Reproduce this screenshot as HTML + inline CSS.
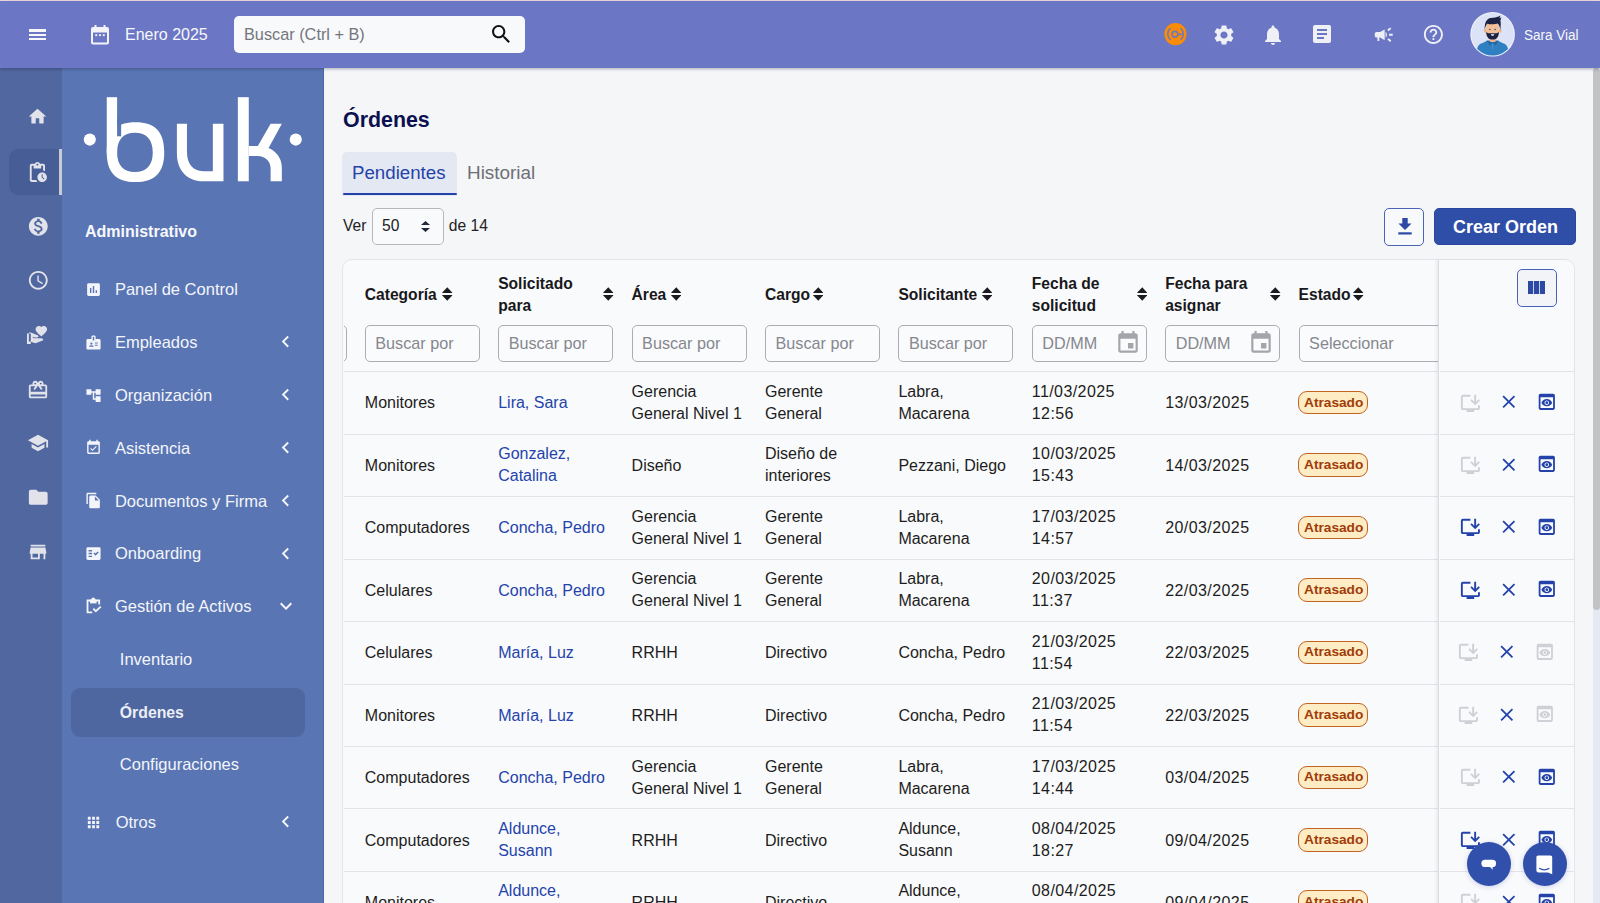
<!DOCTYPE html>
<html><head><meta charset="utf-8"><title>Órdenes</title>
<style>
*{box-sizing:border-box;margin:0;padding:0}
html,body{width:1600px;height:903px;overflow:hidden;background:#f5f6f9;font-family:"Liberation Sans",sans-serif;color:#1f1f23}
.t{position:absolute;white-space:nowrap}
.ic{position:absolute;display:block}
.b{position:absolute}
</style></head><body>
<div class="b" style="left:0;top:0;width:1600px;height:1px;background:#f3dede"></div>
<div class="b" style="left:0;top:68px;width:62px;height:835px;background:#50679f"></div>
<div class="b" style="left:62px;top:68px;width:262px;height:835px;background:#5a75b3"></div>
<div class="b" style="left:0;top:1px;width:1600px;height:67px;background:#6b77c4;box-shadow:0 1px 3px rgba(30,30,60,.35);z-index:3"></div>
<div style="position:absolute;left:0;top:0;width:1600px;height:68px;z-index:4">
<div class="b" style="left:29.2px;top:29.2px;width:17px;height:2.4px;background:#f7f7fb"></div>
<div class="b" style="left:29.2px;top:33.5px;width:17px;height:2.4px;background:#f7f7fb"></div>
<div class="b" style="left:29.2px;top:37.8px;width:17px;height:2.4px;background:#f7f7fb"></div>
<svg class="ic" style="left:90px;top:24px;width:20px;height:21px" viewBox="0 0 20 21"><path fill="#f4f4f8" d="M4.5 1h2v2h7V1h2v2h1.5A2 2 0 0 1 19 5v13.5a2 2 0 0 1-2 2H3a2 2 0 0 1-2-2V5a2 2 0 0 1 2-2h1.5zM3 8.5v10h14v-10z"/><rect x="5.3" y="10.2" width="1.9" height="1.9" fill="#f4f4f8"/><rect x="9.05" y="10.2" width="1.9" height="1.9" fill="#f4f4f8"/><rect x="12.8" y="10.2" width="1.9" height="1.9" fill="#f4f4f8"/></svg>
<div class="t" style="left:125.00px;top:25.00px;font-size:16px;line-height:20px;color:#f7f7fb;font-weight:400;">Enero 2025</div>
<div class="b" style="left:233.5px;top:16px;width:291px;height:37px;background:#f8f9fb;border-radius:5px"></div>
<div class="t" style="left:244.00px;top:24.00px;font-size:16.3px;line-height:20px;color:#74757c;font-weight:400;">Buscar (Ctrl + B)</div>
<svg class="ic" style="left:489.00px;top:22.00px;width:24.50px;height:24.50px;" viewBox="0 0 24 24" fill="#111"><path d="M15.5 14h-.79l-.28-.27C15.41 12.59 16 11.11 16 9.5 16 5.91 13.09 3 9.5 3S3 5.91 3 9.5 5.91 16 9.5 16c1.61 0 3.09-.59 4.23-1.57l.27.28v.79l5 4.99L20.49 19l-4.99-5zm-6 0C7.01 14 5 11.990 5 9.5S7.01 5 9.5 5 14 7.01 14 9.5 11.99 14 9.5 14z"/></svg>
<svg class="ic" style="left:1164px;top:23px;width:23px;height:23px" viewBox="0 0 23 23"><circle cx="11.45" cy="11.1" r="11.1" fill="#fb8c08"/><g stroke="#6c78c4" fill="none" stroke-width="1.4"><path d="M6.6 5.3A7.4 7.4 0 0 0 6.6 16.9"/><path d="M16.6 5.3A7.6 7.6 0 0 1 16.6 16.9"/><circle cx="10.95" cy="11.3" r="2.9" stroke-width="1.6"/><path d="M13.6 11.3H19.3" stroke-width="1.5"/></g></svg>
<svg class="ic" style="left:1212.20px;top:22.50px;width:24.00px;height:24.00px;" viewBox="0 0 24 24" fill="#eff0f5"><path d="M19.14 12.94c.04-.3.06-.61.06-.94 0-.32-.02-.64-.07-.94l2.03-1.58c.18-.14.23-.41.12-.61l-1.92-3.32c-.12-.22-.37-.29-.59-.22l-2.39.96c-.5-.38-1.03-.7-1.62-.94l-.36-2.54c-.04-.24-.24-.41-.48-.41h-3.84c-.24 0-.43.17-.47.41l-.36 2.54c-.59.24-1.13.57-1.62.94l-2.39-.96c-.22-.08-.47 0-.59.22L2.74 8.87c-.12.21-.08.47.12.61l2.03 1.58c-.05.3-.09.63-.09.94s.02.64.07.94l-2.03 1.58c-.18.14-.23.41-.12.61l1.92 3.320c.12.22.37.29.59.22l2.39-.96c.5.38 1.03.7 1.62.94l.36 2.54c.05.24.24.41.48.41h3.84c.24 0 .44-.17.47-.41l.36-2.54c.59-.24 1.13-.56 1.62-.94l2.39.96c.22.08.47 0 .59-.22l1.92-3.32c.12-.22.07-.47-.12-.61l-2.01-1.58zM12 15.6c-1.98 0-3.6-1.62-3.6-3.6s1.62-3.6 3.6-3.6 3.6 1.62 3.6 3.6-1.62 3.6-3.6 3.6z"/></svg>
<svg class="ic" style="left:1261.00px;top:22.50px;width:24.00px;height:24.00px;" viewBox="0 0 24 24" fill="#eff0f5"><path d="M12 22c1.1 0 2-.9 2-2h-4c0 1.1.89 2 2 2zm6-6v-5c0-3.07-1.64-5.64-4.5-6.32V4c0-.83-.67-1.5-1.5-1.5s-1.5.67-1.5 1.5v.68C7.63 5.36 6 7.92 6 11v5l-2 2v1h16v-1l-2-2z"/></svg>
<svg class="ic" style="left:1310.00px;top:22.00px;width:24.00px;height:24.00px;" viewBox="0 0 24 24" fill="#eff0f5"><path d="M19 3H5c-1.1 0-2 .9-2 2v14c0 1.1.9 2 2 2h14c1.1 0 2-.9 2-2V5c0-1.1-.9-2-2-2zm-5 14H7v-2h7v2zm3-4H7v-2h10v2zm0-4H7V7h10v2z"/></svg>
<svg class="ic" style="left:1372.60px;top:23.60px;width:21.50px;height:21.50px;" viewBox="0 0 24 24" fill="#eff0f5"><path d="M18 11v2h4v-2h-4zm-2 6.61c.96.71 2.21 1.65 3.2 2.39.4-.53.8-1.07 1.2-1.6-.99-.74-2.24-1.68-3.2-2.4-.4.54-.8 1.08-1.2 1.61zM20.4 5.6c-.4-.53-.8-1.07-1.2-1.6-.99.74-2.24 1.68-3.2 2.4.4.53.8 1.07 1.2 1.6.96-.72 2.21-1.65 3.2-2.4zM4 9c-1.1 0-2 .9-2 2v2c0 1.1.9 2 2 2h1v4h2v-4h1l5 3V6L8 9H4zm11.5 3c0-1.33-.58-2.53-1.5-3.35v6.69c.92-.81 1.5-2.01 1.5-3.34z"/></svg>
<svg class="ic" style="left:1421.50px;top:23.00px;width:22.80px;height:22.80px;" viewBox="0 0 24 24" fill="#eff0f5"><path d="M11 18h2v-2h-2v2zm1-16C6.48 2 2 6.48 2 12s4.48 10 10 10 10-4.48 10-10S17.52 2 12 2zm0 18c-4.41 0-8-3.59-8-8s3.59-8 8-8 8 3.59 8 8-3.590 8-8 8zm0-14c-2.21 0-4 1.79-4 4h2c0-1.1.9-2 2-2s2 .9 2 2c0 2-3 1.75-3 5h2c0-2.25 3-2.5 3-5 0-2.21-1.79-4-4-4z"/></svg>
<svg class="ic" style="left:1469.5px;top:12px;width:45px;height:45px" viewBox="0 0 45 45"><defs><clipPath id="av"><circle cx="22.6" cy="22.3" r="21.2"/></clipPath></defs><circle cx="22.6" cy="22.3" r="22.3" fill="#eef0fa"/><circle cx="22.6" cy="22.3" r="21.2" fill="#dce3f7"/><g clip-path="url(#av)"><path d="M6.9 44 C6.6 36 7.5 32.5 12 31.2 L17.5 28.6 H27.6 L33 31.2 C37.5 32.5 38.6 36 38.4 44Z" fill="#2f7fc3"/><rect x="19.6" y="25.5" width="6.2" height="4.5" fill="#eeb48c"/><path d="M16.6 28.4 L22.6 30.6 L19.8 33.6Z" fill="#2565a0"/><path d="M28.6 28.4 L22.6 30.6 L25.4 33.6Z" fill="#2565a0"/><rect x="22.1" y="32.2" width="1" height="5.4" fill="#5a8fbe"/><ellipse cx="15.2" cy="18.7" rx="1.4" ry="2" fill="#eeb48c"/><ellipse cx="30.2" cy="18.7" rx="1.4" ry="2" fill="#eeb48c"/><path d="M16.3 13 C16.3 10.5 18.5 10 22.6 10 C26.7 10 28.8 10.5 28.8 13 V22 C28.8 25.5 26 27.5 22.6 27.5 C19.2 27.5 16.3 25.5 16.3 22Z" fill="#f2bf98"/><path d="M16.1 19.5 C16.5 25.8 19 27.6 22.6 27.6 C26.2 27.6 28.7 25.8 28.9 19.5 C27.8 21.5 26.5 21.2 22.6 21.2 C18.7 21.2 17.2 21.5 16.1 19.5Z" fill="#1b2142"/><path d="M20.8 22.2 H24.4 C24 23.4 23.3 23.8 22.6 23.8 C21.9 23.8 21.2 23.4 20.8 22.2Z" fill="#fff"/><path d="M14.8 18 C14.2 8.5 18 5.6 23 5.8 C26 5.6 28 5 30.4 3.6 C30.2 5 29.6 5.8 29.4 6.2 L31.4 5.6 C31 7 30.6 8 30.4 8.6 C31 11 30.8 15 30.2 18 C29.6 14 28.8 12 27.6 11.5 C25.5 12.5 20 12.6 17.2 11.8 C16 13 15.2 15 14.8 18Z" fill="#1c2444"/><circle cx="19.9" cy="17.6" r=".75" fill="#3b4a55"/><circle cx="25.1" cy="17.6" r=".75" fill="#3b4a55"/></g></svg>
<div class="t" style="left:1523.80px;top:26.00px;font-size:14px;line-height:18px;color:#f7f7fb;font-weight:400;transform:scaleX(0.965);transform-origin:0 0">Sara Vial</div>
</div>
<div class="b" style="left:9px;top:149px;width:50px;height:46px;background:#475d95;border-radius:9px 0 0 9px"></div>
<div class="b" style="left:58.5px;top:149px;width:3.7px;height:46px;background:#c9cbd4"></div>
<svg class="ic" style="left:27.20px;top:106.00px;width:21.00px;height:21.00px;" viewBox="0 0 24 24" fill="#e2e3ea"><path d="M10 20v-6h4v6h5v-8h3L12 3 2 12h3v8z"/></svg>
<svg class="ic" style="left:26.20px;top:160.50px;width:22.80px;height:22.80px;" viewBox="0 0 24 24" fill="#e2e3ea"><path d="M17 12c-2.76 0-5 2.24-5 5s2.24 5 5 5 5-2.24 5-5-2.24-5-5-5zm1.65 7.35L16.5 17.2V14h1v2.79l1.85 1.85-.7.71zM18 3h-3.18C14.4 1.84 13.3 1 12 1s-2.4.84-2.82 2H6c-1.1 0-2 .9-2 2v15c0 1.1.9 2 2 2h6.11c-.59-.57-1.07-1.25-1.42-2H6V5h2v3h8V5h2v5.08c.71.1 1.38.31 2 .6V5c0-1.1-.9-2-2-2zm-6 2c-.55 0-1-.45-1-1s.45-1 1-1 1 .45 1 1-.45 1-1 1z"/></svg>
<svg class="ic" style="left:26.50px;top:214.80px;width:22.60px;height:22.60px;" viewBox="0 0 24 24" fill="#e2e3ea"><path d="M12 2C6.48 2 2 6.48 2 12s4.48 10 10 10 10-4.48 10-10S17.52 2 12 2zm1.41 16.09V20h-2.67v-1.93c-1.71-.36-3.16-1.46-3.27-3.4h1.96c.1 1.05.82 1.87 2.65 1.87 1.96 0 2.4-.98 2.4-1.59 0-.83-.44-1.61-2.67-2.14-2.48-.6-4.18-1.62-4.18-3.67 0-1.72 1.39-2.84 3.11-3.21V4h2.67v1.95c1.86.45 2.79 1.86 2.85 3.39H14.3c-.05-1.11-.64-1.87-2.22-1.87-1.5 0-2.4.68-2.4 1.64 0 .84.65 1.39 2.67 1.91s4.18 1.39 4.18 3.91c-.01 1.83-1.38 2.83-3.12 3.16z"/></svg>
<svg class="ic" style="left:26.50px;top:269.00px;width:22.60px;height:22.60px;" viewBox="0 0 24 24" fill="#e2e3ea"><path d="M11.99 2C6.47 2 2 6.48 2 12s4.47 10 9.99 10C17.52 22 22 17.52 22 12S17.52 2 11.99 2zM12 20c-4.42 0-8-3.58-8-8s3.58-8 8-8 8 3.58 8 8-3.58 8-8 8zm.5-13H11v6l5.25 3.15.75-1.23-4.5-2.67z"/></svg>
<svg class="ic" style="left:26.30px;top:322.90px;width:23.00px;height:23.00px;" viewBox="0 0 24 24" fill="#e2e3ea"><path d="M16 13.97C17.62 12.42 22 9.26 22 6.5 22 4.5 20.5 3 18.5 3c-1.04 0-2.04.5-2.5 1.2C15.54 3.5 14.54 3 13.5 3 11.5 3 10 4.5 10 6.5c0 2.76 4.38 5.92 6 7.47zM1 11h4v11H1V11zm15 5h-7l-2.09-.73.33-.94L9 15h2.82c.65 0 1.18-.53 1.18-1.18 0-.49-.31-.93-.77-1.11L4.97 10H3v9.02L10 21l8.01-3c-.01-1.1-.9-2-2.01-2z"/></svg>
<svg class="ic" style="left:26.90px;top:378.70px;width:22.00px;height:22.00px;" viewBox="0 0 24 24" fill="#e2e3ea"><path d="M20 6h-2.18c.11-.31.18-.65.18-1 0-1.66-1.34-3-3-3-1.05 0-1.96.54-2.5 1.35l-.5.67-.5-.68C10.96 2.54 10.05 2 9 2 7.34 2 6 3.34 6 5c0 .35.07.69.18 1H4c-1.11 0-1.99.89-1.99 2L2 19c0 1.11.89 2 2 2h16c1.11 0 2-.89 2-2V8c0-1.11-.89-2-2-2zm-5-2c.55 0 1 .45 1 1s-.45 1-1 1-1-.45-1-1 .45-1 1-1zM9 4c.55 0 1 .45 1 1s-.45 1-1 1-1-.45-1-1 .45-1 1-1zm11 15H4v-2h16v2zm0-5H4V8h5.08L7 10.83 8.62 12 11 8.76l1-1.36 1 1.36L15.38 12 17 10.83 14.92 8H20v6z"/></svg>
<svg class="ic" style="left:26.90px;top:432.20px;width:22.00px;height:22.00px;" viewBox="0 0 24 24" fill="#e2e3ea"><path d="M5 13.18v4L12 21l7-3.82v-4L12 17l-7-3.82zM12 3L1 9l11 6 9-4.91V17h2V9L12 3z"/></svg>
<svg class="ic" style="left:26.80px;top:486.20px;width:22.50px;height:22.50px;" viewBox="0 0 24 24" fill="#e2e3ea"><path d="M10 4H4c-1.1 0-1.99.9-1.99 2L2 18c0 1.1.9 2 2 2h16c1.1 0 2-.9 2-2V8c0-1.1-.9-2-2-2h-8l-2-2z"/></svg>
<svg class="ic" style="left:26.80px;top:541.00px;width:22.00px;height:22.00px;" viewBox="0 0 24 24" fill="#e2e3ea"><path d="M20 4H4v2h16V4zm1 10v-2l-1-5H4l-1 5v2h1v6h10v-6h4v6h2v-6h1zm-9 4H6v-4h6v4z"/></svg>
<svg class="ic" style="left:78px;top:90px;width:230px;height:100.05px" viewBox="0 0 1600 696" fill="#fff"><circle cx="82" cy="345" r="42"/><circle cx="1515" cy="345" r="42"/><path d="M200 50H272V440H200Z"/><path fill-rule="evenodd" d="M400 225C536 225 600 291.5 600 432.5C600 573.5 536 640 400 640C264 640 200 573.5 200 432.5C200 291.5 264 225 400 225ZM396 298C476.6 298 520 345.6 520 434C520 522.4 476.6 570 396 570C315.4 570 272 522.4 272 434C272 345.6 315.4 298 396 298Z"/><rect x="272" y="200" width="28" height="122" fill="#5a75b3"/><path d="M688 235H758V430C758 515 800 565 870 565H938V235H1012V635H870C760 635 688 560 688 440Z"/><path d="M1112 50H1188V635H1112Z"/><path d="M1340 235H1418L1325 405L1250 392Z"/><path d="M1188 390H1250C1350 390 1418 455 1418 540V635H1340V545C1340 495 1300 460 1250 460H1188Z"/></svg>
<div class="t" style="left:85.00px;top:222.00px;font-size:16px;line-height:20px;color:#f7f8fc;font-weight:700;">Administrativo</div>
<div class="t" style="left:114.90px;top:279.00px;font-size:16.5px;line-height:21px;color:#f3f5fb;font-weight:400;">Panel de Control</div>
<svg class="ic" style="left:84.50px;top:281.00px;width:17.00px;height:17.00px;" viewBox="0 0 24 24" fill="#f3f5fb"><path d="M19 3H5c-1.1 0-2 .9-2 2v14c0 1.1.9 2 2 2h14c1.1 0 2-.9 2-2V5c0-1.1-.9-2-2-2zM9 17H7v-7h2v7zm4 0h-2V7h2v10zm4 0h-2v-4h2v4z"/></svg>
<div class="t" style="left:114.90px;top:332.00px;font-size:16.5px;line-height:21px;color:#f3f5fb;font-weight:400;">Empleados</div>
<svg class="ic" style="left:84.50px;top:333.80px;width:17.00px;height:17.00px;" viewBox="0 0 24 24" fill="#f3f5fb"><path d="M20 7h-5V4c0-1.1-.9-2-2-2h-2c-1.1 0-2 .9-2 2v3H4c-1.1 0-2 .9-2 2v11c0 1.1.9 2 2 2h16c1.1 0 2-.9 2-2V9c0-1.1-.9-2-2-2zM9 12c.83 0 1.5.67 1.5 1.5S9.83 15 9 15s-1.5-.67-1.5-1.5S8.17 12 9 12zm3 6H6v-.75c0-1 2-1.5 3-1.5s3 .5 3 1.5V18zm1-9h-2V4h2v5zm5 7.5h-4V15h4v1.5zm0-3h-4V12h4v1.5z"/></svg>
<svg class="ic" style="left:273.90px;top:330.20px;width:23.20px;height:23.20px;" viewBox="0 0 24 24" fill="#f3f5fb"><path d="M15.41 7.41L14 6l-6 6 6 6 1.41-1.41L10.83 12z"/></svg>
<div class="t" style="left:114.90px;top:385.00px;font-size:16.5px;line-height:21px;color:#f3f5fb;font-weight:400;">Organización</div>
<svg class="ic" style="left:84.50px;top:386.60px;width:17.00px;height:17.00px;" viewBox="0 0 24 24" fill="#f3f5fb"><path d="M22 11V3h-7v3H9V3H2v8h7V8h2v10h4v3h7v-8h-7v3h-2V8h2v3z"/></svg>
<svg class="ic" style="left:273.90px;top:383.00px;width:23.20px;height:23.20px;" viewBox="0 0 24 24" fill="#f3f5fb"><path d="M15.41 7.41L14 6l-6 6 6 6 1.41-1.41L10.83 12z"/></svg>
<div class="t" style="left:114.90px;top:438.00px;font-size:16.5px;line-height:21px;color:#f3f5fb;font-weight:400;">Asistencia</div>
<svg class="ic" style="left:84.50px;top:439.40px;width:17.00px;height:17.00px;" viewBox="0 0 24 24" fill="#f3f5fb"><path d="M16.53 11.06L15.47 10l-4.88 4.88-2.12-2.12-1.06 1.06L10.59 17l5.94-5.94zM19 3h-1V1h-2v2H8V1H6v2H5c-1.11 0-1.99.9-1.99 2L3 19c0 1.1.89 2 2 2h14c1.1 0 2-.9 2-2V5c0-1.1-.9-2-2-2zm0 16H5V8h14v11z"/></svg>
<svg class="ic" style="left:273.90px;top:435.80px;width:23.20px;height:23.20px;" viewBox="0 0 24 24" fill="#f3f5fb"><path d="M15.41 7.41L14 6l-6 6 6 6 1.41-1.41L10.83 12z"/></svg>
<div class="t" style="left:114.90px;top:491.00px;font-size:16.5px;line-height:21px;color:#f3f5fb;font-weight:400;">Documentos y Firma</div>
<svg class="ic" style="left:84.50px;top:492.40px;width:17.00px;height:17.00px;" viewBox="0 0 24 24" fill="#f3f5fb"><path d="M16 1H4c-1.1 0-2 .9-2 2v14h2V3h12V1zm-1 4l6 6v10c0 1.1-.9 2-2 2H7.99C6.89 23 6 22.1 6 21l.01-14c0-1.1.89-2 1.99-2h7zm-1 7h5.5L14 6.5V12z"/></svg>
<svg class="ic" style="left:273.90px;top:488.80px;width:23.20px;height:23.20px;" viewBox="0 0 24 24" fill="#f3f5fb"><path d="M15.41 7.41L14 6l-6 6 6 6 1.41-1.41L10.83 12z"/></svg>
<div class="t" style="left:114.90px;top:543.00px;font-size:16.5px;line-height:21px;color:#f3f5fb;font-weight:400;">Onboarding</div>
<svg class="ic" style="left:84.50px;top:545.20px;width:17.00px;height:17.00px;" viewBox="0 0 24 24" fill="#f3f5fb"><path d="M20 3H4c-1.1 0-2 .9-2 2v14c0 1.1.9 2 2 2h16c1.1 0 2-.9 2-2V5c0-1.1-.9-2-2-2zM10 17H5v-2h5v2zm0-4H5v-2h5v2zm0-4H5V7h5v2zm4.82 6L12 12.16l1.41-1.41 1.41 1.42L17.99 9l1.42 1.42L14.82 15z"/></svg>
<svg class="ic" style="left:273.90px;top:541.60px;width:23.20px;height:23.20px;" viewBox="0 0 24 24" fill="#f3f5fb"><path d="M15.41 7.41L14 6l-6 6 6 6 1.41-1.41L10.83 12z"/></svg>
<div class="t" style="left:114.90px;top:596.00px;font-size:16.5px;line-height:21px;color:#f3f5fb;font-weight:400;">Gestión de Activos</div>
<svg class="ic" style="left:80px;top:590.00px;width:30px;height:30px" viewBox="0 0 30 30" fill="none" stroke="#f3f5fb" stroke-width="1.8"><path d="M12.3 22.4H7.5V10.5H19.2V14.6"/><path d="M13.3 18.6L15.8 21.2L20.8 16.6"/><path d="M10 9.6H16.6V13.4H10Z" fill="#f3f5fb" stroke="none"/><circle cx="13.3" cy="9.3" r="1.9" fill="#f3f5fb" stroke="none"/></svg>
<svg class="ic" style="left:274.00px;top:593.90px;width:24.00px;height:24.00px;" viewBox="0 0 24 24" fill="#f3f5fb"><path d="M16.59 8.59L12 13.17 7.41 8.59 6 10l6 6 6-6z"/></svg>
<div class="b" style="left:71px;top:688px;width:233.5px;height:48.5px;background:#4e67a0;border-radius:9px"></div>
<div class="t" style="left:119.80px;top:649.00px;font-size:16.5px;line-height:21px;color:#f3f5fb;font-weight:400;">Inventario</div>
<div class="t" style="left:119.80px;top:703.00px;font-size:15.8px;line-height:20px;color:#eceef5;font-weight:700;">Órdenes</div>
<div class="t" style="left:119.80px;top:754.00px;font-size:16.5px;line-height:21px;color:#f3f5fb;font-weight:400;">Configuraciones</div>
<div class="t" style="left:115.70px;top:812.00px;font-size:16.5px;line-height:21px;color:#f3f5fb;font-weight:400;">Otros</div>
<svg class="ic" style="left:84.50px;top:813.80px;width:17.00px;height:17.00px;" viewBox="0 0 24 24" fill="#f3f5fb"><path d="M4 8h4V4H4v4zm6 12h4v-4h-4v4zm-6 0h4v-4H4v4zm0-6h4v-4H4v4zm6 0h4v-4h-4v4zm6-10v4h4V4h-4zm-6 4h4V4h-4v4zm6 6h4v-4h-4v4zm0 6h4v-4h-4v4z"/></svg>
<svg class="ic" style="left:273.90px;top:810.00px;width:23.20px;height:23.20px;" viewBox="0 0 24 24" fill="#f3f5fb"><path d="M15.41 7.41L14 6l-6 6 6 6 1.41-1.41L10.83 12z"/></svg>
<div class="b" style="left:324px;top:68px;width:1269px;height:835px;background:#f5f6f8"></div>
<div class="b" style="left:322.8px;top:68px;width:1.2px;height:835px;background:#4c66a9"></div>
<div class="t" style="left:343.00px;top:106.00px;font-size:22.5px;line-height:28px;color:#0b1150;font-weight:700;transform:scaleX(0.95);transform-origin:0 0">Órdenes</div>
<div class="b" style="left:342.2px;top:152.4px;width:114.8px;height:43.2px;background:#e4e8f2;border-radius:5px 5px 0 0"></div>
<div class="b" style="left:342.6px;top:193px;width:114px;height:2.4px;background:#2343a8;border-radius:1.2px"></div>
<div class="t" style="left:352.00px;top:161.00px;font-size:18.7px;line-height:23px;color:#2443a8;font-weight:400;">Pendientes</div>
<div class="t" style="left:467.00px;top:161.00px;font-size:18.9px;line-height:24px;color:#6e6f74;font-weight:400;">Historial</div>
<div class="t" style="left:343.00px;top:216.00px;font-size:15.6px;line-height:20px;color:#222;font-weight:400;">Ver</div>
<div class="b" style="left:372px;top:208.2px;width:72px;height:37px;border:1px solid #b5b7bd;border-radius:5px;background:#f9fafc"></div>
<div class="t" style="left:382.00px;top:216.00px;font-size:15.6px;line-height:20px;color:#222;font-weight:400;">50</div>
<svg class="ic" style="left:421px;top:221px;width:9px;height:11px" viewBox="0 0 9 11" fill="#1f2937"><path d="M4.5 0L9 4H0Z"/><path d="M0 7H9L4.5 11Z"/></svg>
<div class="t" style="left:448.80px;top:216.00px;font-size:15.6px;line-height:20px;color:#222;font-weight:400;">de 14</div>
<div class="b" style="left:1384.4px;top:207.9px;width:40px;height:37.8px;border:1.4px solid #4a63b4;border-radius:5px;background:#f8f9fb"></div>
<svg class="ic" style="left:1397.5px;top:217.5px;width:14px;height:17px" viewBox="0 0 14 17" fill="#2c49a5"><path d="M4.3 0H9.7V5.5H13.5L7 12L.5 5.5H4.3Z"/><rect x="0.3" y="14.3" width="13.4" height="2.2"/></svg>
<div class="b" style="left:1434px;top:207.9px;width:141.6px;height:37px;background:#2f4ea7;border-radius:5px;border:1px solid #2a46a0"></div>
<div class="t" style="left:1453.00px;top:216.00px;font-size:18px;line-height:22px;color:#ffffff;font-weight:700;">Crear Orden</div>
<div class="b" style="left:342.2px;top:259.2px;width:1232.5px;height:700px;background:#f9fafc;border:1px solid #e3e5ea;border-radius:10px"></div>
<div style="position:absolute;left:343.7px;top:0;width:1094.1px;height:903px;overflow:hidden"><div style="position:absolute;left:-343.7px;top:0;width:1600px;height:903px">
<div class="t" style="left:364.80px;top:285.00px;font-size:15.6px;line-height:20px;color:#18181b;font-weight:700;">Categoría</div>
<svg class="ic" style="left:442.20px;top:287.3px;width:10.5px;height:14px" viewBox="0 0 10.5 14" fill="#1c1c20"><path d="M5.25 0.3L10.2 5.6Q10.5 6.1 9.9 6.1H0.6Q0 6.1 0.3 5.6Z"/><path d="M0.6 7.9H9.9Q10.5 7.9 10.2 8.4L5.25 13.7L0.3 8.4Q0 7.9 0.6 7.9Z"/></svg>
<div class="t" style="left:498.20px;top:274.00px;font-size:15.6px;line-height:20px;color:#18181b;font-weight:700;">Solicitado</div>
<div class="t" style="left:498.20px;top:296.00px;font-size:15.6px;line-height:20px;color:#18181b;font-weight:700;">para</div>
<svg class="ic" style="left:603.40px;top:287.3px;width:10.5px;height:14px" viewBox="0 0 10.5 14" fill="#1c1c20"><path d="M5.25 0.3L10.2 5.6Q10.5 6.1 9.9 6.1H0.6Q0 6.1 0.3 5.6Z"/><path d="M0.6 7.9H9.9Q10.5 7.9 10.2 8.4L5.25 13.7L0.3 8.4Q0 7.9 0.6 7.9Z"/></svg>
<div class="t" style="left:631.60px;top:285.00px;font-size:15.6px;line-height:20px;color:#18181b;font-weight:700;">Área</div>
<svg class="ic" style="left:670.80px;top:287.3px;width:10.5px;height:14px" viewBox="0 0 10.5 14" fill="#1c1c20"><path d="M5.25 0.3L10.2 5.6Q10.5 6.1 9.9 6.1H0.6Q0 6.1 0.3 5.6Z"/><path d="M0.6 7.9H9.9Q10.5 7.9 10.2 8.4L5.25 13.7L0.3 8.4Q0 7.9 0.6 7.9Z"/></svg>
<div class="t" style="left:765.00px;top:285.00px;font-size:15.6px;line-height:20px;color:#18181b;font-weight:700;">Cargo</div>
<svg class="ic" style="left:812.60px;top:287.3px;width:10.5px;height:14px" viewBox="0 0 10.5 14" fill="#1c1c20"><path d="M5.25 0.3L10.2 5.6Q10.5 6.1 9.9 6.1H0.6Q0 6.1 0.3 5.6Z"/><path d="M0.6 7.9H9.9Q10.5 7.9 10.2 8.4L5.25 13.7L0.3 8.4Q0 7.9 0.6 7.9Z"/></svg>
<div class="t" style="left:898.40px;top:285.00px;font-size:15.6px;line-height:20px;color:#18181b;font-weight:700;">Solicitante</div>
<svg class="ic" style="left:981.80px;top:287.3px;width:10.5px;height:14px" viewBox="0 0 10.5 14" fill="#1c1c20"><path d="M5.25 0.3L10.2 5.6Q10.5 6.1 9.9 6.1H0.6Q0 6.1 0.3 5.6Z"/><path d="M0.6 7.9H9.9Q10.5 7.9 10.2 8.4L5.25 13.7L0.3 8.4Q0 7.9 0.6 7.9Z"/></svg>
<div class="t" style="left:1031.80px;top:274.00px;font-size:15.6px;line-height:20px;color:#18181b;font-weight:700;">Fecha de</div>
<div class="t" style="left:1031.80px;top:296.00px;font-size:15.6px;line-height:20px;color:#18181b;font-weight:700;">solicitud</div>
<svg class="ic" style="left:1136.80px;top:287.3px;width:10.5px;height:14px" viewBox="0 0 10.5 14" fill="#1c1c20"><path d="M5.25 0.3L10.2 5.6Q10.5 6.1 9.9 6.1H0.6Q0 6.1 0.3 5.6Z"/><path d="M0.6 7.9H9.9Q10.5 7.9 10.2 8.4L5.25 13.7L0.3 8.4Q0 7.9 0.6 7.9Z"/></svg>
<div class="t" style="left:1165.20px;top:274.00px;font-size:15.6px;line-height:20px;color:#18181b;font-weight:700;">Fecha para</div>
<div class="t" style="left:1165.20px;top:296.00px;font-size:15.6px;line-height:20px;color:#18181b;font-weight:700;">asignar</div>
<svg class="ic" style="left:1270.00px;top:287.3px;width:10.5px;height:14px" viewBox="0 0 10.5 14" fill="#1c1c20"><path d="M5.25 0.3L10.2 5.6Q10.5 6.1 9.9 6.1H0.6Q0 6.1 0.3 5.6Z"/><path d="M0.6 7.9H9.9Q10.5 7.9 10.2 8.4L5.25 13.7L0.3 8.4Q0 7.9 0.6 7.9Z"/></svg>
<div class="t" style="left:1298.60px;top:285.00px;font-size:15.6px;line-height:20px;color:#18181b;font-weight:700;">Estado</div>
<svg class="ic" style="left:1353.40px;top:287.3px;width:10.5px;height:14px" viewBox="0 0 10.5 14" fill="#1c1c20"><path d="M5.25 0.3L10.2 5.6Q10.5 6.1 9.9 6.1H0.6Q0 6.1 0.3 5.6Z"/><path d="M0.6 7.9H9.9Q10.5 7.9 10.2 8.4L5.25 13.7L0.3 8.4Q0 7.9 0.6 7.9Z"/></svg>
<div class="b" style="left:231.60px;top:324.6px;width:115px;height:37.2px;border:1px solid #abadb3;border-radius:5px;background:#fafbfd"></div>
<div class="b" style="left:364.80px;top:324.6px;width:115px;height:37.2px;border:1px solid #abadb3;border-radius:5px;background:#fafbfd"></div>
<div class="t" style="left:375.30px;top:333.00px;font-size:16.2px;line-height:20px;color:#86878d;font-weight:400;">Buscar por</div>
<div class="b" style="left:498.20px;top:324.6px;width:115px;height:37.2px;border:1px solid #abadb3;border-radius:5px;background:#fafbfd"></div>
<div class="t" style="left:508.70px;top:333.00px;font-size:16.2px;line-height:20px;color:#86878d;font-weight:400;">Buscar por</div>
<div class="b" style="left:631.60px;top:324.6px;width:115px;height:37.2px;border:1px solid #abadb3;border-radius:5px;background:#fafbfd"></div>
<div class="t" style="left:642.10px;top:333.00px;font-size:16.2px;line-height:20px;color:#86878d;font-weight:400;">Buscar por</div>
<div class="b" style="left:765.00px;top:324.6px;width:115px;height:37.2px;border:1px solid #abadb3;border-radius:5px;background:#fafbfd"></div>
<div class="t" style="left:775.50px;top:333.00px;font-size:16.2px;line-height:20px;color:#86878d;font-weight:400;">Buscar por</div>
<div class="b" style="left:898.40px;top:324.6px;width:115px;height:37.2px;border:1px solid #abadb3;border-radius:5px;background:#fafbfd"></div>
<div class="t" style="left:908.90px;top:333.00px;font-size:16.2px;line-height:20px;color:#86878d;font-weight:400;">Buscar por</div>
<div class="b" style="left:1031.80px;top:324.6px;width:115px;height:37.2px;border:1px solid #abadb3;border-radius:5px;background:#fafbfd"></div>
<div class="t" style="left:1042.30px;top:333.00px;font-size:16.2px;line-height:20px;color:#86878d;font-weight:400;">DD/MM</div>
<svg class="ic" style="left:1114.80px;top:329.90px;width:26.00px;height:26.00px;" viewBox="0 0 24 24" fill="#a3a5ab"><path d="M17 12h-5v5h5v-5zM16 1v2H8V1H6v2H5c-1.11 0-1.99.9-1.99 2L3 19c0 1.1.89 2 2 2h14c1.1 0 2-.9 2-2V5c0-1.1-.9-2-2-2h-1V1h-2zm3 18H5V8h14v11z"/></svg>
<div class="b" style="left:1165.20px;top:324.6px;width:115px;height:37.2px;border:1px solid #abadb3;border-radius:5px;background:#fafbfd"></div>
<div class="t" style="left:1175.70px;top:333.00px;font-size:16.2px;line-height:20px;color:#86878d;font-weight:400;">DD/MM</div>
<svg class="ic" style="left:1248.20px;top:329.90px;width:26.00px;height:26.00px;" viewBox="0 0 24 24" fill="#a3a5ab"><path d="M17 12h-5v5h5v-5zM16 1v2H8V1H6v2H5c-1.11 0-1.99.9-1.99 2L3 19c0 1.1.89 2 2 2h14c1.1 0 2-.9 2-2V5c0-1.1-.9-2-2-2h-1V1h-2zm3 18H5V8h14v11z"/></svg>
<div class="b" style="left:1298.60px;top:324.6px;width:160px;height:37.2px;border:1px solid #abadb3;border-radius:5px;background:#fafbfd"></div>
<div class="t" style="left:1309.10px;top:333.00px;font-size:16.2px;line-height:20px;color:#86878d;font-weight:400;">Seleccionar</div>
<div class="b" style="left:343.2px;top:371.30px;width:1230.5px;height:1px;background:#e3e4e9"></div>
<div class="b" style="left:343.2px;top:433.75px;width:1230.5px;height:1px;background:#e3e4e9"></div>
<div class="b" style="left:343.2px;top:496.20px;width:1230.5px;height:1px;background:#e3e4e9"></div>
<div class="b" style="left:343.2px;top:558.65px;width:1230.5px;height:1px;background:#e3e4e9"></div>
<div class="b" style="left:343.2px;top:621.10px;width:1230.5px;height:1px;background:#e3e4e9"></div>
<div class="b" style="left:343.2px;top:683.55px;width:1230.5px;height:1px;background:#e3e4e9"></div>
<div class="b" style="left:343.2px;top:746.00px;width:1230.5px;height:1px;background:#e3e4e9"></div>
<div class="b" style="left:343.2px;top:808.45px;width:1230.5px;height:1px;background:#e3e4e9"></div>
<div class="b" style="left:343.2px;top:870.90px;width:1230.5px;height:1px;background:#e3e4e9"></div>
<div class="t" style="left:364.80px;top:393.00px;font-size:16px;line-height:20px;color:#1d1d21;font-weight:400;">Monitores</div>
<div class="t" style="left:498.20px;top:393.00px;font-size:16px;line-height:20px;color:#2443aa;font-weight:400;">Lira, Sara</div>
<div class="t" style="left:631.60px;top:382.00px;font-size:16px;line-height:20px;color:#1d1d21;font-weight:400;">Gerencia</div>
<div class="t" style="left:631.60px;top:404.00px;font-size:16px;line-height:20px;color:#1d1d21;font-weight:400;">General Nivel 1</div>
<div class="t" style="left:765.00px;top:382.00px;font-size:16px;line-height:20px;color:#1d1d21;font-weight:400;">Gerente</div>
<div class="t" style="left:765.00px;top:404.00px;font-size:16px;line-height:20px;color:#1d1d21;font-weight:400;">General</div>
<div class="t" style="left:898.40px;top:382.00px;font-size:16px;line-height:20px;color:#1d1d21;font-weight:400;">Labra,</div>
<div class="t" style="left:898.40px;top:404.00px;font-size:16px;line-height:20px;color:#1d1d21;font-weight:400;">Macarena</div>
<div class="t" style="left:1031.80px;top:382.00px;font-size:16px;line-height:20px;color:#1d1d21;font-weight:400;letter-spacing:0.42px">11/03/2025</div>
<div class="t" style="left:1031.80px;top:404.00px;font-size:16px;line-height:20px;color:#1d1d21;font-weight:400;letter-spacing:0.42px">12:56</div>
<div class="t" style="left:1165.20px;top:393.00px;font-size:16px;line-height:20px;color:#1d1d21;font-weight:400;letter-spacing:0.42px">13/03/2025</div>
<div class="b" style="left:1298px;top:390.80px;width:70.2px;height:23.6px;background:#fdecc4;border:1px solid #c2631f;border-radius:9px"></div>
<div class="t" style="left:1304.00px;top:394.00px;font-size:13.7px;line-height:17px;color:#a13b08;font-weight:700;">Atrasado</div>
<div class="t" style="left:364.80px;top:456.00px;font-size:16px;line-height:20px;color:#1d1d21;font-weight:400;">Monitores</div>
<div class="t" style="left:498.20px;top:444.00px;font-size:16px;line-height:20px;color:#2443aa;font-weight:400;">Gonzalez,</div>
<div class="t" style="left:498.20px;top:466.00px;font-size:16px;line-height:20px;color:#2443aa;font-weight:400;">Catalina</div>
<div class="t" style="left:631.60px;top:456.00px;font-size:16px;line-height:20px;color:#1d1d21;font-weight:400;">Diseño</div>
<div class="t" style="left:765.00px;top:444.00px;font-size:16px;line-height:20px;color:#1d1d21;font-weight:400;">Diseño de</div>
<div class="t" style="left:765.00px;top:466.00px;font-size:16px;line-height:20px;color:#1d1d21;font-weight:400;">interiores</div>
<div class="t" style="left:898.40px;top:456.00px;font-size:16px;line-height:20px;color:#1d1d21;font-weight:400;">Pezzani, Diego</div>
<div class="t" style="left:1031.80px;top:444.00px;font-size:16px;line-height:20px;color:#1d1d21;font-weight:400;letter-spacing:0.42px">10/03/2025</div>
<div class="t" style="left:1031.80px;top:466.00px;font-size:16px;line-height:20px;color:#1d1d21;font-weight:400;letter-spacing:0.42px">15:43</div>
<div class="t" style="left:1165.20px;top:456.00px;font-size:16px;line-height:20px;color:#1d1d21;font-weight:400;letter-spacing:0.42px">14/03/2025</div>
<div class="b" style="left:1298px;top:453.25px;width:70.2px;height:23.6px;background:#fdecc4;border:1px solid #c2631f;border-radius:9px"></div>
<div class="t" style="left:1304.00px;top:456.00px;font-size:13.7px;line-height:17px;color:#a13b08;font-weight:700;">Atrasado</div>
<div class="t" style="left:364.80px;top:518.00px;font-size:16px;line-height:20px;color:#1d1d21;font-weight:400;">Computadores</div>
<div class="t" style="left:498.20px;top:518.00px;font-size:16px;line-height:20px;color:#2443aa;font-weight:400;">Concha, Pedro</div>
<div class="t" style="left:631.60px;top:507.00px;font-size:16px;line-height:20px;color:#1d1d21;font-weight:400;">Gerencia</div>
<div class="t" style="left:631.60px;top:529.00px;font-size:16px;line-height:20px;color:#1d1d21;font-weight:400;">General Nivel 1</div>
<div class="t" style="left:765.00px;top:507.00px;font-size:16px;line-height:20px;color:#1d1d21;font-weight:400;">Gerente</div>
<div class="t" style="left:765.00px;top:529.00px;font-size:16px;line-height:20px;color:#1d1d21;font-weight:400;">General</div>
<div class="t" style="left:898.40px;top:507.00px;font-size:16px;line-height:20px;color:#1d1d21;font-weight:400;">Labra,</div>
<div class="t" style="left:898.40px;top:529.00px;font-size:16px;line-height:20px;color:#1d1d21;font-weight:400;">Macarena</div>
<div class="t" style="left:1031.80px;top:507.00px;font-size:16px;line-height:20px;color:#1d1d21;font-weight:400;letter-spacing:0.42px">17/03/2025</div>
<div class="t" style="left:1031.80px;top:529.00px;font-size:16px;line-height:20px;color:#1d1d21;font-weight:400;letter-spacing:0.42px">14:57</div>
<div class="t" style="left:1165.20px;top:518.00px;font-size:16px;line-height:20px;color:#1d1d21;font-weight:400;letter-spacing:0.42px">20/03/2025</div>
<div class="b" style="left:1298px;top:515.70px;width:70.2px;height:23.6px;background:#fdecc4;border:1px solid #c2631f;border-radius:9px"></div>
<div class="t" style="left:1304.00px;top:519.00px;font-size:13.7px;line-height:17px;color:#a13b08;font-weight:700;">Atrasado</div>
<div class="t" style="left:364.80px;top:581.00px;font-size:16px;line-height:20px;color:#1d1d21;font-weight:400;">Celulares</div>
<div class="t" style="left:498.20px;top:581.00px;font-size:16px;line-height:20px;color:#2443aa;font-weight:400;">Concha, Pedro</div>
<div class="t" style="left:631.60px;top:569.00px;font-size:16px;line-height:20px;color:#1d1d21;font-weight:400;">Gerencia</div>
<div class="t" style="left:631.60px;top:591.00px;font-size:16px;line-height:20px;color:#1d1d21;font-weight:400;">General Nivel 1</div>
<div class="t" style="left:765.00px;top:569.00px;font-size:16px;line-height:20px;color:#1d1d21;font-weight:400;">Gerente</div>
<div class="t" style="left:765.00px;top:591.00px;font-size:16px;line-height:20px;color:#1d1d21;font-weight:400;">General</div>
<div class="t" style="left:898.40px;top:569.00px;font-size:16px;line-height:20px;color:#1d1d21;font-weight:400;">Labra,</div>
<div class="t" style="left:898.40px;top:591.00px;font-size:16px;line-height:20px;color:#1d1d21;font-weight:400;">Macarena</div>
<div class="t" style="left:1031.80px;top:569.00px;font-size:16px;line-height:20px;color:#1d1d21;font-weight:400;letter-spacing:0.42px">20/03/2025</div>
<div class="t" style="left:1031.80px;top:591.00px;font-size:16px;line-height:20px;color:#1d1d21;font-weight:400;letter-spacing:0.42px">11:37</div>
<div class="t" style="left:1165.20px;top:581.00px;font-size:16px;line-height:20px;color:#1d1d21;font-weight:400;letter-spacing:0.42px">22/03/2025</div>
<div class="b" style="left:1298px;top:578.15px;width:70.2px;height:23.6px;background:#fdecc4;border:1px solid #c2631f;border-radius:9px"></div>
<div class="t" style="left:1304.00px;top:581.00px;font-size:13.7px;line-height:17px;color:#a13b08;font-weight:700;">Atrasado</div>
<div class="t" style="left:364.80px;top:643.00px;font-size:16px;line-height:20px;color:#1d1d21;font-weight:400;">Celulares</div>
<div class="t" style="left:498.20px;top:643.00px;font-size:16px;line-height:20px;color:#2443aa;font-weight:400;">María, Luz</div>
<div class="t" style="left:631.60px;top:643.00px;font-size:16px;line-height:20px;color:#1d1d21;font-weight:400;">RRHH</div>
<div class="t" style="left:765.00px;top:643.00px;font-size:16px;line-height:20px;color:#1d1d21;font-weight:400;">Directivo</div>
<div class="t" style="left:898.40px;top:643.00px;font-size:16px;line-height:20px;color:#1d1d21;font-weight:400;">Concha, Pedro</div>
<div class="t" style="left:1031.80px;top:632.00px;font-size:16px;line-height:20px;color:#1d1d21;font-weight:400;letter-spacing:0.42px">21/03/2025</div>
<div class="t" style="left:1031.80px;top:654.00px;font-size:16px;line-height:20px;color:#1d1d21;font-weight:400;letter-spacing:0.42px">11:54</div>
<div class="t" style="left:1165.20px;top:643.00px;font-size:16px;line-height:20px;color:#1d1d21;font-weight:400;letter-spacing:0.42px">22/03/2025</div>
<div class="b" style="left:1298px;top:640.60px;width:70.2px;height:23.6px;background:#fdecc4;border:1px solid #c2631f;border-radius:9px"></div>
<div class="t" style="left:1304.00px;top:643.00px;font-size:13.7px;line-height:17px;color:#a13b08;font-weight:700;">Atrasado</div>
<div class="t" style="left:364.80px;top:706.00px;font-size:16px;line-height:20px;color:#1d1d21;font-weight:400;">Monitores</div>
<div class="t" style="left:498.20px;top:706.00px;font-size:16px;line-height:20px;color:#2443aa;font-weight:400;">María, Luz</div>
<div class="t" style="left:631.60px;top:706.00px;font-size:16px;line-height:20px;color:#1d1d21;font-weight:400;">RRHH</div>
<div class="t" style="left:765.00px;top:706.00px;font-size:16px;line-height:20px;color:#1d1d21;font-weight:400;">Directivo</div>
<div class="t" style="left:898.40px;top:706.00px;font-size:16px;line-height:20px;color:#1d1d21;font-weight:400;">Concha, Pedro</div>
<div class="t" style="left:1031.80px;top:694.00px;font-size:16px;line-height:20px;color:#1d1d21;font-weight:400;letter-spacing:0.42px">21/03/2025</div>
<div class="t" style="left:1031.80px;top:716.00px;font-size:16px;line-height:20px;color:#1d1d21;font-weight:400;letter-spacing:0.42px">11:54</div>
<div class="t" style="left:1165.20px;top:706.00px;font-size:16px;line-height:20px;color:#1d1d21;font-weight:400;letter-spacing:0.42px">22/03/2025</div>
<div class="b" style="left:1298px;top:703.05px;width:70.2px;height:23.6px;background:#fdecc4;border:1px solid #c2631f;border-radius:9px"></div>
<div class="t" style="left:1304.00px;top:706.00px;font-size:13.7px;line-height:17px;color:#a13b08;font-weight:700;">Atrasado</div>
<div class="t" style="left:364.80px;top:768.00px;font-size:16px;line-height:20px;color:#1d1d21;font-weight:400;">Computadores</div>
<div class="t" style="left:498.20px;top:768.00px;font-size:16px;line-height:20px;color:#2443aa;font-weight:400;">Concha, Pedro</div>
<div class="t" style="left:631.60px;top:757.00px;font-size:16px;line-height:20px;color:#1d1d21;font-weight:400;">Gerencia</div>
<div class="t" style="left:631.60px;top:779.00px;font-size:16px;line-height:20px;color:#1d1d21;font-weight:400;">General Nivel 1</div>
<div class="t" style="left:765.00px;top:757.00px;font-size:16px;line-height:20px;color:#1d1d21;font-weight:400;">Gerente</div>
<div class="t" style="left:765.00px;top:779.00px;font-size:16px;line-height:20px;color:#1d1d21;font-weight:400;">General</div>
<div class="t" style="left:898.40px;top:757.00px;font-size:16px;line-height:20px;color:#1d1d21;font-weight:400;">Labra,</div>
<div class="t" style="left:898.40px;top:779.00px;font-size:16px;line-height:20px;color:#1d1d21;font-weight:400;">Macarena</div>
<div class="t" style="left:1031.80px;top:757.00px;font-size:16px;line-height:20px;color:#1d1d21;font-weight:400;letter-spacing:0.42px">17/03/2025</div>
<div class="t" style="left:1031.80px;top:779.00px;font-size:16px;line-height:20px;color:#1d1d21;font-weight:400;letter-spacing:0.42px">14:44</div>
<div class="t" style="left:1165.20px;top:768.00px;font-size:16px;line-height:20px;color:#1d1d21;font-weight:400;letter-spacing:0.42px">03/04/2025</div>
<div class="b" style="left:1298px;top:765.50px;width:70.2px;height:23.6px;background:#fdecc4;border:1px solid #c2631f;border-radius:9px"></div>
<div class="t" style="left:1304.00px;top:768.00px;font-size:13.7px;line-height:17px;color:#a13b08;font-weight:700;">Atrasado</div>
<div class="t" style="left:364.80px;top:831.00px;font-size:16px;line-height:20px;color:#1d1d21;font-weight:400;">Computadores</div>
<div class="t" style="left:498.20px;top:819.00px;font-size:16px;line-height:20px;color:#2443aa;font-weight:400;">Aldunce,</div>
<div class="t" style="left:498.20px;top:841.00px;font-size:16px;line-height:20px;color:#2443aa;font-weight:400;">Susann</div>
<div class="t" style="left:631.60px;top:831.00px;font-size:16px;line-height:20px;color:#1d1d21;font-weight:400;">RRHH</div>
<div class="t" style="left:765.00px;top:831.00px;font-size:16px;line-height:20px;color:#1d1d21;font-weight:400;">Directivo</div>
<div class="t" style="left:898.40px;top:819.00px;font-size:16px;line-height:20px;color:#1d1d21;font-weight:400;">Aldunce,</div>
<div class="t" style="left:898.40px;top:841.00px;font-size:16px;line-height:20px;color:#1d1d21;font-weight:400;">Susann</div>
<div class="t" style="left:1031.80px;top:819.00px;font-size:16px;line-height:20px;color:#1d1d21;font-weight:400;letter-spacing:0.42px">08/04/2025</div>
<div class="t" style="left:1031.80px;top:841.00px;font-size:16px;line-height:20px;color:#1d1d21;font-weight:400;letter-spacing:0.42px">18:27</div>
<div class="t" style="left:1165.20px;top:831.00px;font-size:16px;line-height:20px;color:#1d1d21;font-weight:400;letter-spacing:0.42px">09/04/2025</div>
<div class="b" style="left:1298px;top:827.95px;width:70.2px;height:23.6px;background:#fdecc4;border:1px solid #c2631f;border-radius:9px"></div>
<div class="t" style="left:1304.00px;top:831.00px;font-size:13.7px;line-height:17px;color:#a13b08;font-weight:700;">Atrasado</div>
<div class="t" style="left:364.80px;top:893.00px;font-size:16px;line-height:20px;color:#1d1d21;font-weight:400;">Monitores</div>
<div class="t" style="left:498.20px;top:881.00px;font-size:16px;line-height:20px;color:#2443aa;font-weight:400;">Aldunce,</div>
<div class="t" style="left:498.20px;top:903.00px;font-size:16px;line-height:20px;color:#2443aa;font-weight:400;">Susann</div>
<div class="t" style="left:631.60px;top:893.00px;font-size:16px;line-height:20px;color:#1d1d21;font-weight:400;">RRHH</div>
<div class="t" style="left:765.00px;top:893.00px;font-size:16px;line-height:20px;color:#1d1d21;font-weight:400;">Directivo</div>
<div class="t" style="left:898.40px;top:881.00px;font-size:16px;line-height:20px;color:#1d1d21;font-weight:400;">Aldunce,</div>
<div class="t" style="left:898.40px;top:903.00px;font-size:16px;line-height:20px;color:#1d1d21;font-weight:400;">Susann</div>
<div class="t" style="left:1031.80px;top:881.00px;font-size:16px;line-height:20px;color:#1d1d21;font-weight:400;letter-spacing:0.42px">08/04/2025</div>
<div class="t" style="left:1031.80px;top:903.00px;font-size:16px;line-height:20px;color:#1d1d21;font-weight:400;letter-spacing:0.42px">18:44</div>
<div class="t" style="left:1165.20px;top:893.00px;font-size:16px;line-height:20px;color:#1d1d21;font-weight:400;letter-spacing:0.42px">09/04/2025</div>
<div class="b" style="left:1298px;top:890.40px;width:70.2px;height:23.6px;background:#fdecc4;border:1px solid #c2631f;border-radius:9px"></div>
<div class="t" style="left:1304.00px;top:893.00px;font-size:13.7px;line-height:17px;color:#a13b08;font-weight:700;">Atrasado</div>
</div></div>
<div class="b" style="left:1437.8px;top:260.2px;width:135.9000000000001px;height:650px;background:#f9fafc;border-left:1px solid #dcdde2;border-top-right-radius:9px;box-shadow:-2px 0 3px rgba(0,0,0,.06)"></div>
<div class="b" style="left:1439.5px;top:371.30px;width:134.20000000000005px;height:1px;background:#e3e4e9"></div>
<div class="b" style="left:1439.5px;top:433.75px;width:134.20000000000005px;height:1px;background:#e3e4e9"></div>
<div class="b" style="left:1439.5px;top:496.20px;width:134.20000000000005px;height:1px;background:#e3e4e9"></div>
<div class="b" style="left:1439.5px;top:558.65px;width:134.20000000000005px;height:1px;background:#e3e4e9"></div>
<div class="b" style="left:1439.5px;top:621.10px;width:134.20000000000005px;height:1px;background:#e3e4e9"></div>
<div class="b" style="left:1439.5px;top:683.55px;width:134.20000000000005px;height:1px;background:#e3e4e9"></div>
<div class="b" style="left:1439.5px;top:746.00px;width:134.20000000000005px;height:1px;background:#e3e4e9"></div>
<div class="b" style="left:1439.5px;top:808.45px;width:134.20000000000005px;height:1px;background:#e3e4e9"></div>
<div class="b" style="left:1439.5px;top:870.90px;width:134.20000000000005px;height:1px;background:#e3e4e9"></div>
<div class="b" style="left:1517px;top:269.3px;width:39.6px;height:37.4px;border:1.4px solid #4a63b4;border-radius:5px;background:#f3f4f8"></div>
<svg class="ic" style="left:1528px;top:281.2px;width:17px;height:13px" viewBox="0 0 17 13" fill="#2c49a5"><rect x="0" y="0" width="5.1" height="13"/><rect x="5.9" y="0" width="5.2" height="13"/><rect x="11.9" y="0" width="5.1" height="13"/></svg>
<svg class="ic" style="left:1458.70px;top:391.50px;width:22.80px;height:22.80px;" viewBox="0 0 24 24" fill="#cfd0d5"><path d="M20 17H4V5h8V3H4c-1.11 0-2 .89-2 2v12c0 1.1.89 2 2 2h4v2h8v-2h4c1.1 0 2-.9 2-2v-3h-2v3zm-3-3l5-5-1.41-1.41L18 10.17V3h-2v7.17l-2.59-2.58L12 9l5 5z"/></svg>
<svg class="ic" style="left:1498.10px;top:391.35px;width:21.60px;height:21.60px;" viewBox="0 0 24 24" fill="#2443aa"><path d="M19 6.41L17.59 5 12 10.59 6.41 5 5 6.41 10.59 12 5 17.59 6.41 19 12 13.41 17.59 19 19 17.59 13.41 12z"/></svg>
<svg class="ic" style="left:1536.10px;top:391.00px;width:21.60px;height:21.60px;" viewBox="0 0 24 24" fill="#2443aa"><path d="M19 3H5c-1.11 0-2 .9-2 2v14c0 1.1.89 2 2 2h14c1.1 0 2-.9 2-2V5c0-1.1-.89-2-2-2zm0 16H5V7h14v12zm-5.5-6c0 .83-.67 1.5-1.5 1.5s-1.5-.67-1.5-1.5.67-1.5 1.5-1.5 1.5.67 1.5 1.5zM12 9c-2.73 0-5.06 1.66-6 4 .94 2.34 3.27 4 6 4s5.06-1.66 6-4c-.94-2.34-3.27-4-6-4zm0 6.5c-1.38 0-2.5-1.12-2.5-2.5s1.12-2.5 2.5-2.5 2.5 1.12 2.5 2.5-1.12 2.5-2.5 2.5z"/></svg>
<svg class="ic" style="left:1458.70px;top:453.95px;width:22.80px;height:22.80px;" viewBox="0 0 24 24" fill="#cfd0d5"><path d="M20 17H4V5h8V3H4c-1.11 0-2 .89-2 2v12c0 1.1.89 2 2 2h4v2h8v-2h4c1.1 0 2-.9 2-2v-3h-2v3zm-3-3l5-5-1.41-1.41L18 10.17V3h-2v7.17l-2.59-2.58L12 9l5 5z"/></svg>
<svg class="ic" style="left:1498.10px;top:453.80px;width:21.60px;height:21.60px;" viewBox="0 0 24 24" fill="#2443aa"><path d="M19 6.41L17.59 5 12 10.59 6.41 5 5 6.41 10.59 12 5 17.59 6.41 19 12 13.41 17.59 19 19 17.59 13.41 12z"/></svg>
<svg class="ic" style="left:1536.10px;top:453.45px;width:21.60px;height:21.60px;" viewBox="0 0 24 24" fill="#2443aa"><path d="M19 3H5c-1.11 0-2 .9-2 2v14c0 1.1.89 2 2 2h14c1.1 0 2-.9 2-2V5c0-1.1-.89-2-2-2zm0 16H5V7h14v12zm-5.5-6c0 .83-.67 1.5-1.5 1.5s-1.5-.67-1.5-1.5.67-1.5 1.5-1.5 1.5.67 1.5 1.5zM12 9c-2.73 0-5.06 1.66-6 4 .94 2.34 3.27 4 6 4s5.06-1.66 6-4c-.94-2.34-3.27-4-6-4zm0 6.5c-1.38 0-2.5-1.12-2.5-2.5s1.12-2.5 2.5-2.5 2.5 1.12 2.5 2.5-1.12 2.5-2.5 2.5z"/></svg>
<svg class="ic" style="left:1458.70px;top:516.40px;width:22.80px;height:22.80px;" viewBox="0 0 24 24" fill="#2443aa"><path d="M20 17H4V5h8V3H4c-1.11 0-2 .89-2 2v12c0 1.1.89 2 2 2h4v2h8v-2h4c1.1 0 2-.9 2-2v-3h-2v3zm-3-3l5-5-1.41-1.41L18 10.17V3h-2v7.17l-2.59-2.58L12 9l5 5z"/></svg>
<svg class="ic" style="left:1498.10px;top:516.25px;width:21.60px;height:21.60px;" viewBox="0 0 24 24" fill="#2443aa"><path d="M19 6.41L17.59 5 12 10.59 6.41 5 5 6.41 10.59 12 5 17.59 6.41 19 12 13.41 17.59 19 19 17.59 13.41 12z"/></svg>
<svg class="ic" style="left:1536.10px;top:515.90px;width:21.60px;height:21.60px;" viewBox="0 0 24 24" fill="#2443aa"><path d="M19 3H5c-1.11 0-2 .9-2 2v14c0 1.1.89 2 2 2h14c1.1 0 2-.9 2-2V5c0-1.1-.89-2-2-2zm0 16H5V7h14v12zm-5.5-6c0 .83-.67 1.5-1.5 1.5s-1.5-.67-1.5-1.5.67-1.5 1.5-1.5 1.5.67 1.5 1.5zM12 9c-2.73 0-5.06 1.66-6 4 .94 2.34 3.27 4 6 4s5.06-1.66 6-4c-.94-2.34-3.27-4-6-4zm0 6.5c-1.38 0-2.5-1.12-2.5-2.5s1.12-2.5 2.5-2.5 2.5 1.12 2.5 2.5-1.12 2.5-2.5 2.5z"/></svg>
<svg class="ic" style="left:1458.70px;top:578.85px;width:22.80px;height:22.80px;" viewBox="0 0 24 24" fill="#2443aa"><path d="M20 17H4V5h8V3H4c-1.11 0-2 .89-2 2v12c0 1.1.89 2 2 2h4v2h8v-2h4c1.1 0 2-.9 2-2v-3h-2v3zm-3-3l5-5-1.41-1.41L18 10.17V3h-2v7.17l-2.59-2.58L12 9l5 5z"/></svg>
<svg class="ic" style="left:1498.10px;top:578.70px;width:21.60px;height:21.60px;" viewBox="0 0 24 24" fill="#2443aa"><path d="M19 6.41L17.59 5 12 10.59 6.41 5 5 6.41 10.59 12 5 17.59 6.41 19 12 13.41 17.59 19 19 17.59 13.41 12z"/></svg>
<svg class="ic" style="left:1536.10px;top:578.35px;width:21.60px;height:21.60px;" viewBox="0 0 24 24" fill="#2443aa"><path d="M19 3H5c-1.11 0-2 .9-2 2v14c0 1.1.89 2 2 2h14c1.1 0 2-.9 2-2V5c0-1.1-.89-2-2-2zm0 16H5V7h14v12zm-5.5-6c0 .83-.67 1.5-1.5 1.5s-1.5-.67-1.5-1.5.67-1.5 1.5-1.5 1.5.67 1.5 1.5zM12 9c-2.73 0-5.06 1.66-6 4 .94 2.34 3.27 4 6 4s5.06-1.66 6-4c-.94-2.34-3.27-4-6-4zm0 6.5c-1.38 0-2.5-1.12-2.5-2.5s1.12-2.5 2.5-2.5 2.5 1.12 2.5 2.5-1.12 2.5-2.5 2.5z"/></svg>
<svg class="ic" style="left:1456.70px;top:641.30px;width:22.80px;height:22.80px;" viewBox="0 0 24 24" fill="#cfd0d5"><path d="M20 17H4V5h8V3H4c-1.11 0-2 .89-2 2v12c0 1.1.89 2 2 2h4v2h8v-2h4c1.1 0 2-.9 2-2v-3h-2v3zm-3-3l5-5-1.41-1.41L18 10.17V3h-2v7.17l-2.59-2.58L12 9l5 5z"/></svg>
<svg class="ic" style="left:1496.10px;top:641.15px;width:21.60px;height:21.60px;" viewBox="0 0 24 24" fill="#2443aa"><path d="M19 6.41L17.59 5 12 10.59 6.41 5 5 6.41 10.59 12 5 17.59 6.41 19 12 13.41 17.59 19 19 17.59 13.41 12z"/></svg>
<svg class="ic" style="left:1534.10px;top:640.80px;width:21.60px;height:21.60px;" viewBox="0 0 24 24" fill="#cfd0d5"><path d="M19 3H5c-1.11 0-2 .9-2 2v14c0 1.1.89 2 2 2h14c1.1 0 2-.9 2-2V5c0-1.1-.89-2-2-2zm0 16H5V7h14v12zm-5.5-6c0 .83-.67 1.5-1.5 1.5s-1.5-.67-1.5-1.5.67-1.5 1.5-1.5 1.5.67 1.5 1.5zM12 9c-2.73 0-5.06 1.66-6 4 .94 2.34 3.27 4 6 4s5.06-1.66 6-4c-.94-2.34-3.27-4-6-4zm0 6.5c-1.38 0-2.5-1.12-2.5-2.5s1.12-2.5 2.5-2.5 2.5 1.12 2.5 2.5-1.12 2.5-2.5 2.5z"/></svg>
<svg class="ic" style="left:1456.70px;top:703.75px;width:22.80px;height:22.80px;" viewBox="0 0 24 24" fill="#cfd0d5"><path d="M20 17H4V5h8V3H4c-1.11 0-2 .89-2 2v12c0 1.1.89 2 2 2h4v2h8v-2h4c1.1 0 2-.9 2-2v-3h-2v3zm-3-3l5-5-1.41-1.41L18 10.17V3h-2v7.17l-2.59-2.58L12 9l5 5z"/></svg>
<svg class="ic" style="left:1496.10px;top:703.60px;width:21.60px;height:21.60px;" viewBox="0 0 24 24" fill="#2443aa"><path d="M19 6.41L17.59 5 12 10.59 6.41 5 5 6.41 10.59 12 5 17.59 6.41 19 12 13.41 17.59 19 19 17.59 13.41 12z"/></svg>
<svg class="ic" style="left:1534.10px;top:703.25px;width:21.60px;height:21.60px;" viewBox="0 0 24 24" fill="#cfd0d5"><path d="M19 3H5c-1.11 0-2 .9-2 2v14c0 1.1.89 2 2 2h14c1.1 0 2-.9 2-2V5c0-1.1-.89-2-2-2zm0 16H5V7h14v12zm-5.5-6c0 .83-.67 1.5-1.5 1.5s-1.5-.67-1.5-1.5.67-1.5 1.5-1.5 1.5.67 1.5 1.5zM12 9c-2.73 0-5.06 1.66-6 4 .94 2.34 3.27 4 6 4s5.06-1.66 6-4c-.94-2.34-3.27-4-6-4zm0 6.5c-1.38 0-2.5-1.12-2.5-2.5s1.12-2.5 2.5-2.5 2.5 1.12 2.5 2.5-1.12 2.5-2.5 2.5z"/></svg>
<svg class="ic" style="left:1458.70px;top:766.20px;width:22.80px;height:22.80px;" viewBox="0 0 24 24" fill="#cfd0d5"><path d="M20 17H4V5h8V3H4c-1.11 0-2 .89-2 2v12c0 1.1.89 2 2 2h4v2h8v-2h4c1.1 0 2-.9 2-2v-3h-2v3zm-3-3l5-5-1.41-1.41L18 10.17V3h-2v7.17l-2.59-2.58L12 9l5 5z"/></svg>
<svg class="ic" style="left:1498.10px;top:766.05px;width:21.60px;height:21.60px;" viewBox="0 0 24 24" fill="#2443aa"><path d="M19 6.41L17.59 5 12 10.59 6.41 5 5 6.41 10.59 12 5 17.59 6.41 19 12 13.41 17.59 19 19 17.59 13.41 12z"/></svg>
<svg class="ic" style="left:1536.10px;top:765.70px;width:21.60px;height:21.60px;" viewBox="0 0 24 24" fill="#2443aa"><path d="M19 3H5c-1.11 0-2 .9-2 2v14c0 1.1.89 2 2 2h14c1.1 0 2-.9 2-2V5c0-1.1-.89-2-2-2zm0 16H5V7h14v12zm-5.5-6c0 .83-.67 1.5-1.5 1.5s-1.5-.67-1.5-1.5.67-1.5 1.5-1.5 1.5.67 1.5 1.5zM12 9c-2.73 0-5.06 1.66-6 4 .94 2.34 3.27 4 6 4s5.06-1.66 6-4c-.94-2.34-3.27-4-6-4zm0 6.5c-1.38 0-2.5-1.12-2.5-2.5s1.12-2.5 2.5-2.5 2.5 1.12 2.5 2.5-1.12 2.5-2.5 2.5z"/></svg>
<svg class="ic" style="left:1458.70px;top:828.65px;width:22.80px;height:22.80px;" viewBox="0 0 24 24" fill="#2443aa"><path d="M20 17H4V5h8V3H4c-1.11 0-2 .89-2 2v12c0 1.1.89 2 2 2h4v2h8v-2h4c1.1 0 2-.9 2-2v-3h-2v3zm-3-3l5-5-1.41-1.41L18 10.17V3h-2v7.17l-2.59-2.58L12 9l5 5z"/></svg>
<svg class="ic" style="left:1498.10px;top:828.50px;width:21.60px;height:21.60px;" viewBox="0 0 24 24" fill="#2443aa"><path d="M19 6.41L17.59 5 12 10.59 6.41 5 5 6.41 10.59 12 5 17.59 6.41 19 12 13.41 17.59 19 19 17.59 13.41 12z"/></svg>
<svg class="ic" style="left:1536.10px;top:828.15px;width:21.60px;height:21.60px;" viewBox="0 0 24 24" fill="#2443aa"><path d="M19 3H5c-1.11 0-2 .9-2 2v14c0 1.1.89 2 2 2h14c1.1 0 2-.9 2-2V5c0-1.1-.89-2-2-2zm0 16H5V7h14v12zm-5.5-6c0 .83-.67 1.5-1.5 1.5s-1.5-.67-1.5-1.5.67-1.5 1.5-1.5 1.5.67 1.5 1.5zM12 9c-2.73 0-5.06 1.66-6 4 .94 2.34 3.27 4 6 4s5.06-1.66 6-4c-.94-2.34-3.27-4-6-4zm0 6.5c-1.38 0-2.5-1.12-2.5-2.5s1.12-2.5 2.5-2.5 2.5 1.12 2.5 2.5-1.12 2.5-2.5 2.5z"/></svg>
<svg class="ic" style="left:1458.70px;top:891.10px;width:22.80px;height:22.80px;" viewBox="0 0 24 24" fill="#cfd0d5"><path d="M20 17H4V5h8V3H4c-1.11 0-2 .89-2 2v12c0 1.1.89 2 2 2h4v2h8v-2h4c1.1 0 2-.9 2-2v-3h-2v3zm-3-3l5-5-1.41-1.41L18 10.17V3h-2v7.17l-2.59-2.58L12 9l5 5z"/></svg>
<svg class="ic" style="left:1498.10px;top:890.95px;width:21.60px;height:21.60px;" viewBox="0 0 24 24" fill="#2443aa"><path d="M19 6.41L17.59 5 12 10.59 6.41 5 5 6.41 10.59 12 5 17.59 6.41 19 12 13.41 17.59 19 19 17.59 13.41 12z"/></svg>
<svg class="ic" style="left:1536.10px;top:890.60px;width:21.60px;height:21.60px;" viewBox="0 0 24 24" fill="#2443aa"><path d="M19 3H5c-1.11 0-2 .9-2 2v14c0 1.1.89 2 2 2h14c1.1 0 2-.9 2-2V5c0-1.1-.89-2-2-2zm0 16H5V7h14v12zm-5.5-6c0 .83-.67 1.5-1.5 1.5s-1.5-.67-1.5-1.5.67-1.5 1.5-1.5 1.5.67 1.5 1.5zM12 9c-2.73 0-5.06 1.66-6 4 .94 2.34 3.27 4 6 4s5.06-1.66 6-4c-.94-2.34-3.27-4-6-4zm0 6.5c-1.38 0-2.5-1.12-2.5-2.5s1.12-2.5 2.5-2.5 2.5 1.12 2.5 2.5-1.12 2.5-2.5 2.5z"/></svg>
<div class="b" style="left:1467px;top:842px;width:44px;height:44px;border-radius:50%;background:#3150ab;box-shadow:0 1px 5px rgba(40,60,160,.22)"></div>
<svg class="ic" style="left:1480px;top:858px;width:18px;height:14px" viewBox="0 0 18 14" fill="#fff"><rect x="1.4" y="1.8" width="14.7" height="7.2" rx="3.6"/><path d="M9.5 8.5L12.5 8.5L12.8 11.7Z"/></svg>
<div class="b" style="left:1522.7px;top:842px;width:44px;height:44px;border-radius:50%;background:#3150ab;box-shadow:0 1px 5px rgba(40,60,160,.22)"></div>
<svg class="ic" style="left:1536px;top:854.5px;width:17px;height:20px" viewBox="0 0 17 20" fill="#fff"><path d="M2.2 0.4H14.5Q16.2 0.4 16.2 2.1V19.2L12 17.4H2.2Q0.4 17.4 0.4 15.6V2.1Q0.4 0.4 2.2 0.4Z"/><path d="M3.2 13.2Q8.3 16.4 13.4 13.2" stroke="#3150ab" stroke-width="1.3" fill="none"/></svg>
<div class="b" style="left:1593px;top:68px;width:7px;height:835px;background:#e5e9f4"></div>
<div class="b" style="left:1593px;top:68px;width:7px;height:542px;background:#c2c3c5;border-radius:3.5px"></div>
</body></html>
